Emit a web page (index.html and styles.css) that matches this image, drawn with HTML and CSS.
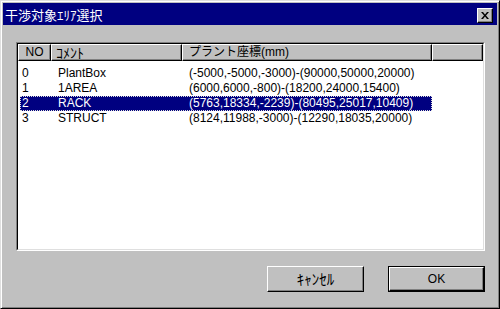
FILE: index.html
```html
<!DOCTYPE html>
<html lang="ja">
<head>
<meta charset="UTF-8">
<title>干渉対象ｴﾘｱ選択</title>
<link rel="stylesheet" href="styles.css">
</head>
<body>

<div class="window">
  <!-- Title bar -->
  <div class="titlebar">
    <span class="title">干渉対象ｴﾘｱ選択</span>
    <div class="close">
      <svg width="8" height="7" viewBox="0 0 8 7">
        <path d="M0 0h2l2 2.5 2-2.5h2l-3 3.5 3 3.5h-2l-2-2.5-2 2.5h-2l3-3.5z" fill="#000"/>
      </svg>
    </div>
  </div>

  <div class="body">
    <!-- List view -->
    <div class="listview">
      <div class="list-inner">
        <div class="header">
          <div class="hcell col-no center">NO</div>
          <div class="hcell col-comment"><span class="kana">ｺﾒﾝﾄ</span></div>
          <div class="hcell col-coord">プラント座標(mm)</div>
          <div class="hcell col-rest"></div>
        </div>
        <div class="rows">
          <div class="row">
            <div class="cells">
              <span class="cell c-no">0</span>
              <span class="cell c-comment">PlantBox</span>
              <span class="cell c-coord">(-5000,-5000,-3000)-(90000,50000,20000)</span>
            </div>
          </div>
          <div class="row">
            <div class="cells">
              <span class="cell c-no">1</span>
              <span class="cell c-comment">1AREA</span>
              <span class="cell c-coord">(6000,6000,-800)-(18200,24000,15400)</span>
            </div>
          </div>
          <div class="row">
            <div class="cells selected">
              <span class="cell c-no">2</span>
              <span class="cell c-comment">RACK</span>
              <span class="cell c-coord">(5763,18334,-2239)-(80495,25017,10409)</span>
            </div>
          </div>
          <div class="row">
            <div class="cells">
              <span class="cell c-no">3</span>
              <span class="cell c-comment">STRUCT</span>
              <span class="cell c-coord">(8124,11988,-3000)-(12290,18035,20000)</span>
            </div>
          </div>
        </div>
      </div>
    </div>

    <!-- Buttons -->
    <div class="buttons">
      <div class="btn"><span class="kana btn-kana">ｷｬﾝｾﾙ</span></div>
      <div class="btn default"><div class="btn-face">OK</div></div>
    </div>
  </div>
</div>

</body>
</html>
```

FILE: styles.css
```css
/* Reset */
* {
  margin: 0;
  padding: 0;
  box-sizing: border-box;
}
body {
  background: #c0c0c0;
  font-family: "Liberation Sans", "Noto Sans CJK JP", sans-serif;
  font-size: 12px;
  color: #000;
}

/* Window frame */
.window {
  width: 500px;
  height: 309px;
  background: #c0c0c0;
  border: 1px solid;
  border-color: #dfdfdf #000 #000 #dfdfdf;
  box-shadow: inset 1px 1px #fff, inset -1px -1px #808080;
  padding: 2px;
  display: flex;
  flex-direction: column;
}

/* Title bar */
.titlebar {
  height: 22px;
  background: #000080;
  color: #fff;
  display: flex;
  align-items: center;
  justify-content: space-between;
  padding: 0 4px 0 2px;
}
.title {
  font-family: "Noto Sans CJK JP", sans-serif;
  font-size: 13px;
  line-height: 1;
}
.close {
  width: 16px;
  height: 15px;
  margin-top: 2px;
  background: #c0c0c0;
  border: 1px solid;
  border-color: #fff #000 #000 #fff;
  box-shadow: inset -1px -1px #808080;
  display: flex;
  align-items: center;
  justify-content: center;
}

.kana {
  font-family: "Noto Sans CJK JP", sans-serif;
  font-size: 14px;
  line-height: 14px;
}

/* Dialog body */
.body {
  flex: 1;
  padding: 17px 12px 0 13px;
  display: flex;
  flex-direction: column;
}

/* List view */
.listview {
  height: 209px;
  border: 1px solid;
  border-color: #808080 #fff #fff #808080;
}
.list-inner {
  height: 100%;
  background: #fff;
  border: 1px solid;
  border-color: #000 #dfdfdf #dfdfdf #000;
  display: flex;
  flex-direction: column;
}
.header {
  height: 17px;
  display: flex;
}
.hcell {
  height: 100%;
  background: #c0c0c0;
  border: 1px solid;
  border-color: #fff #000 #000 #fff;
  box-shadow: inset -1px -1px #808080;
  padding-left: 4px;
  line-height: 14px;
  white-space: nowrap;
}
.hcell.center {
  text-align: center;
  padding-left: 0;
}
.col-no { width: 33px; }
.col-comment { width: 131px; }
.col-coord { width: 250px; padding-left: 6px; }
.col-rest { flex: 1; }

.rows {
  padding: 5px 0 0 2px;
}
.row {
  height: 15px;
  display: flex;
}
.cells {
  width: 412px;
  display: flex;
  line-height: 15px;
  white-space: nowrap;
}
.cells.selected {
  background: #000080;
  color: #fff;
  outline: 1px dotted #dfdfdf;
  outline-offset: -1px;
}
.c-no { width: 31px; padding-left: 2px; }
.c-comment { width: 131px; padding-left: 7px; }
.c-coord { width: 250px; padding-left: 7px; }

/* Buttons */
.buttons {
  margin-top: 15px;
  display: flex;
  justify-content: flex-end;
  gap: 24px;
}
.btn {
  width: 97px;
  height: 26px;
  background: #c0c0c0;
  border: 1px solid;
  border-color: #fff #000 #000 #fff;
  box-shadow: inset -1px -1px #808080;
  display: flex;
  align-items: center;
  justify-content: center;
}
.btn-kana {
  font-size: 15px;
}
.btn.default {
  border-color: #000;
  box-shadow: none;
}
.btn-face {
  width: 100%;
  height: 100%;
  border: 1px solid;
  border-color: #fff #000 #000 #fff;
  box-shadow: inset -1px -1px #808080;
  display: flex;
  align-items: center;
  justify-content: center;
}
```
